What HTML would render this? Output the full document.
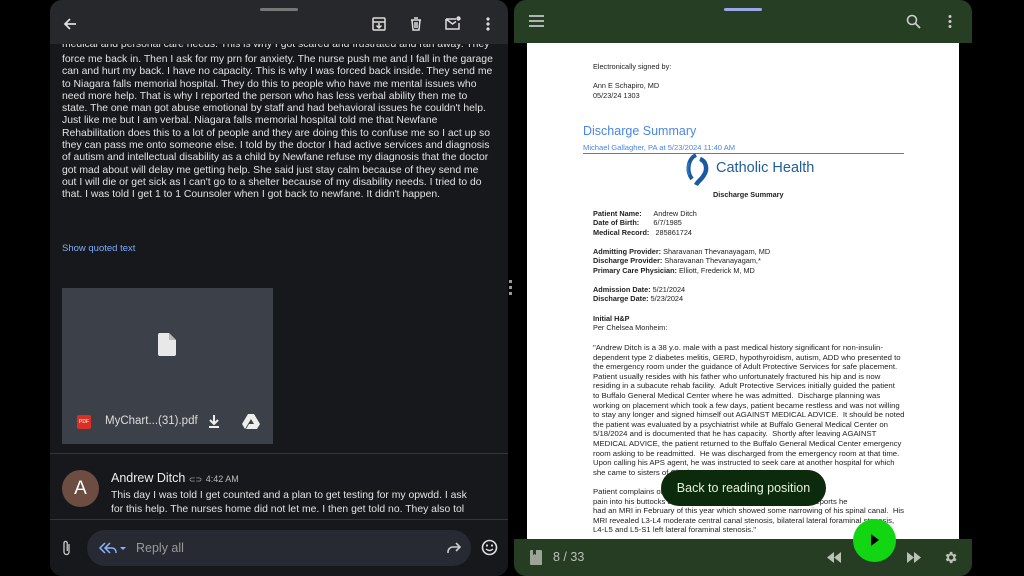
<!DOCTYPE html>
<html><head><meta charset="utf-8"><style>
*{margin:0;padding:0;box-sizing:border-box}
body{width:1024px;height:576px;background:#000;position:relative;overflow:hidden;font-family:"Liberation Sans",sans-serif}
.abs{position:absolute}
#L{left:50px;top:0;width:458px;height:576px;background:#17181b;border-radius:12px;overflow:hidden}
#Ltop{left:0;top:0;width:458px;height:44px;background:#27282c}
.txt{color:#e3e3e3;font-size:10.4px;line-height:12.3px;left:12px;white-space:nowrap}
#R{left:514px;top:0;width:458px;height:576px;background:#000;border-radius:12px;overflow:hidden}
.doc{font-size:7.3px;color:#222;line-height:9.6px;white-space:nowrap}
</style></head><body>
<div id="L" class="abs">
 <div id="Ltop" class="abs"></div>
 <div class="abs" style="left:210px;top:8px;width:38px;height:3px;border-radius:2px;background:#777"></div>
 <svg class="abs" style="left:12px;top:16px" width="16" height="16" viewBox="0 0 16 16"><path d="M14 8H3M8 3L3 8l5 5" stroke="#ddd" stroke-width="1.8" fill="none"/></svg>
 <svg class="abs" style="left:321px;top:16px" width="16" height="16" viewBox="0 0 16 16"><rect x="2" y="2" width="12" height="12" rx="1" stroke="#ddd" stroke-width="1.5" fill="none"/><path d="M2 6h12M8 7v5M5.5 9.5L8 12l2.5-2.5" stroke="#ddd" stroke-width="1.5" fill="none"/></svg>
 <svg class="abs" style="left:358px;top:16px" width="16" height="16" viewBox="0 0 16 16"><path d="M3 4h10M6 2h4M4 4l1 10h6l1-10M7 6v6M9 6v6" stroke="#ddd" stroke-width="1.5" fill="none"/></svg>
 <svg class="abs" style="left:394px;top:15px" width="18" height="16" viewBox="0 0 18 16"><path d="M2 4h10v0M2 4v10h13V8M2 4l6.5 5L12 6.5" stroke="#ddd" stroke-width="1.5" fill="none"/><circle cx="14.5" cy="3.5" r="2.2" fill="#ddd"/></svg>
 <svg class="abs" style="left:434px;top:16px" width="8" height="16"><circle cx="4" cy="3" r="1.6" fill="#ddd"/><circle cx="4" cy="8" r="1.6" fill="#ddd"/><circle cx="4" cy="13" r="1.6" fill="#ddd"/></svg>
 <div class="abs txt" style="top:44px;height:8px;overflow:hidden"><div style="margin-top:-5px">medical and personal care needs. This is why I got scared and frustrated and ran away. They</div></div>
 <div class="abs txt" style="top:54px">force me back in. Then I ask for my prn for anxiety. The nurse push me and I fall in the garage<br>can and hurt my back. I have no capacity. This is why I was forced back inside. They send me<br>to Niagara falls memorial hospital. They do this to people who have me mental issues who<br>need more help. That is why I reported the person who has less verbal ability then me to<br>state. The one man got abuse emotional by staff and had behavioral issues he couldn't help.<br>Just like me but I am verbal. Niagara falls memorial hospital told me that Newfane<br>Rehabilitation does this to a lot of people and they are doing this to confuse me so I act up so<br>they can pass me onto someone else. I told by the doctor I had active services and diagnosis<br>of autism and intellectual disability as a child by Newfane refuse my diagnosis that the doctor<br>got mad about will delay me getting help. She said just stay calm because of they send me<br>out I will die or get sick as I can't go to a shelter because of my disability needs. I tried to do<br>that. I was told I get 1 to 1 Counsoler when I got back to newfane. It didn't happen.</div>
 <div class="abs" style="left:12px;top:243px;font-size:9.5px;color:#7cacf8">Show quoted text</div>
 <div class="abs" style="left:12px;top:288px;width:211px;height:156px;background:#3c4048"></div>
 <svg class="abs" style="left:108px;top:333px" width="18" height="23" viewBox="0 0 18 23"><path d="M0 2a2 2 0 012-2h9l7 7v14a2 2 0 01-2 2H2a2 2 0 01-2-2z" fill="#e8e8e8"/><path d="M11 0v7h7" fill="#b8b8b8"/></svg>
 <div class="abs" style="left:27px;top:415px;width:14px;height:14px;background:#d93025;border-radius:2px;font-size:5px;color:#fff;text-align:center;line-height:14px">PDF</div>
 <div class="abs" style="left:55px;top:415px;font-size:11.5px;color:#ddd">MyChart...(31).pdf</div>
 <svg class="abs" style="left:157px;top:414px" width="14" height="15"><path d="M7 1v8M3 6l4 4 4-4M2 13h10" stroke="#eee" stroke-width="2" fill="none"/></svg>
 <svg class="abs" style="left:192px;top:414px" width="18" height="15" viewBox="0 0 18 15"><path d="M6 0h6l6 10h-6zM6 0L0 10l3 5 6-10zM4 15l3-5h11l-3 5z" fill="#eee"/></svg>
 <div class="abs" style="left:0;top:453px;width:458px;height:1px;background:#33353a"></div>
 <div class="abs" style="left:12px;top:470px;width:37px;height:37px;border-radius:50%;background:#6d4c41;color:#fff;font-size:19px;text-align:center;line-height:37px">A</div>
 <div class="abs" style="left:61px;top:471px;font-size:12.5px;color:#eee">Andrew Ditch <span style="font-size:8px;color:#aaa">⊂⊃</span> <span style="font-size:9px;color:#bbb">4:42 AM</span></div>
 <div class="abs txt" style="left:61px;top:489px;height:28px;overflow:hidden;line-height:14px">This day I was told I get counted and a plan to get testing for my opwdd. I ask<br>for this help. The nurses home did not let me. I then get told no. They also tol</div>
 <div class="abs" style="left:0;top:519px;width:458px;height:1px;background:#33353a"></div>
 <svg class="abs" style="left:12px;top:540px" width="10" height="16"><path d="M7 4v8a2.5 2.5 0 01-5 0V3a1.6 1.6 0 013.2 0v8" stroke="#ccc" stroke-width="1.3" fill="none"/></svg>
 <div class="abs" style="left:37px;top:530px;width:384px;height:36px;border-radius:18px;background:#272a33"></div>
 <svg class="abs" style="left:47px;top:541px" width="36" height="14"><path d="M8 2L3 7l5 5M13 2L8 7l5 5M8 7h7a4 4 0 014 4v1" stroke="#8ab4f8" stroke-width="1.5" fill="none"/><path d="M23 6h6l-3 3z" fill="#8ab4f8"/></svg>
 <div class="abs" style="left:86px;top:541px;font-size:12.5px;color:#999">Reply all</div>
 <svg class="abs" style="left:396px;top:541px" width="16" height="14"><path d="M10 2l4 4-4 4M14 6H7a5 5 0 00-5 5v1" stroke="#ccc" stroke-width="1.6" fill="none"/></svg>
 <svg class="abs" style="left:431px;top:539px" width="17" height="17"><circle cx="8.5" cy="8.5" r="7" stroke="#ddd" stroke-width="1.6" fill="none"/><circle cx="6" cy="6.5" r="1.1" fill="#ddd"/><circle cx="11" cy="6.5" r="1.1" fill="#ddd"/><path d="M5 10q3.5 3 7 0" stroke="#ddd" stroke-width="1.4" fill="none"/></svg>
</div>
<div class="abs" style="left:509px;top:280px;width:3px;height:18px;background:repeating-linear-gradient(#999 0 3px,transparent 3px 6px)"></div>
<div id="R" class="abs">
 <div class="abs" style="left:0;top:0;width:458px;height:43px;background:#263f24"></div>
 <div class="abs" style="left:210px;top:8px;width:38px;height:3px;border-radius:2px;background:#9aa8e8"></div>
 <svg class="abs" style="left:15px;top:15px" width="15" height="12"><path d="M0 1h15M0 6h15M0 11h15" stroke="#ddd" stroke-width="1.6"/></svg>
 <svg class="abs" style="left:392px;top:14px" width="15" height="15"><circle cx="6" cy="6" r="4.5" stroke="#ccc" stroke-width="1.6" fill="none"/><path d="M9.5 9.5L14 14" stroke="#ccc" stroke-width="1.8"/></svg>
 <svg class="abs" style="left:432px;top:14px" width="8" height="16"><circle cx="4" cy="2.5" r="1.5" fill="#ccc"/><circle cx="4" cy="7.5" r="1.5" fill="#ccc"/><circle cx="4" cy="12.5" r="1.5" fill="#ccc"/></svg>
 <div class="abs" style="left:13px;top:43px;width:432px;height:496px;background:#fff"></div>
 <div class="abs doc" style="left:79px;top:62px">Electronically signed by:<br><br>Ann E Schapiro, MD<br>05/23/24 1303</div>
 <div class="abs" style="left:69px;top:124px;font-size:12.5px;color:#4a86e8">Discharge Summary</div>
 <div class="abs" style="left:69px;top:143px;font-size:7.6px;color:#4a86e8">Michael Gallagher, PA at 5/23/2024 11:40 AM</div>
 <div class="abs" style="left:69px;top:153px;width:321px;height:1px;background:#777"></div>
 <svg class="abs" style="left:170px;top:153px" width="32" height="34" viewBox="0 0 32 34"><path d="M12 2C4 6 2 18 8 26" stroke="#1a5aa0" stroke-width="4" fill="none"/><path d="M16 6c6 2 8 10 4 16-2 4-6 6-8 10" stroke="#1a5aa0" stroke-width="4.5" fill="none"/><path d="M5 10C3 14 3 18 5 22" stroke="#2a78c0" stroke-width="2" fill="none"/></svg>
 <div class="abs" style="left:202px;top:160px;font-size:14.5px;color:#1f5e9c">Catholic Health</div>
 <div class="abs doc" style="left:199px;top:190px;font-weight:bold">Discharge Summary</div>
 <div class="abs doc" style="left:79px;top:209px;line-height:9.4px"><b>Patient Name:</b>&nbsp;&nbsp;&nbsp;&nbsp;&nbsp; Andrew Ditch<br><b>Date of Birth:</b>&nbsp;&nbsp;&nbsp;&nbsp;&nbsp;&nbsp; 6/7/1985<br><b>Medical Record:</b>&nbsp;&nbsp; 285861724</div>
 <div class="abs doc" style="left:79px;top:247px;line-height:9.4px"><b>Admitting Provider:</b> Sharavanan Thevanayagam, MD<br><b>Discharge Provider:</b> Sharavanan Thevanayagam,*<br><b>Primary Care Physician:</b> Elliott, Frederick M, MD</div>
 <div class="abs doc" style="left:79px;top:285px;line-height:9.4px"><b>Admission Date:</b> 5/21/2024<br><b>Discharge Date:</b> 5/23/2024</div>
 <div class="abs doc" style="left:79px;top:314px;line-height:9.4px"><b>Initial H&amp;P</b><br>Per Chelsea Monheim:</div>
 <div class="abs doc" style="left:79px;top:343px;font-size:7.75px">"Andrew Ditch is a 38 y.o. male with a past medical history significant for non-insulin-<br>dependent type 2 diabetes melitis, GERD, hypothyroidism, autism, ADD who presented to<br>the emergency room under the guidance of Adult Protective Services for safe placement.<br>Patient usually resides with his father who unfortunately fractured his hip and is now<br>residing in a subacute rehab facility.&nbsp; Adult Protective Services initially guided the patient<br>to Buffalo General Medical Center where he was admitted.&nbsp; Discharge planning was<br>working on placement which took a few days, patient became restless and was not willing<br>to stay any longer and signed himself out AGAINST MEDICAL ADVICE.&nbsp; It should be noted<br>the patient was evaluated by a psychiatrist while at Buffalo General Medical Center on<br>5/18/2024 and is documented that he has capacity.&nbsp; Shortly after leaving AGAINST<br>MEDICAL ADVICE, the patient returned to the Buffalo General Medical Center emergency<br>room asking to be readmitted.&nbsp; He was discharged from the emergency room at that time.<br>Upon calling his APS agent, he was instructed to seek care at another hospital for which<br>she came to sisters of Charity.<br><br>Patient complains of back pain that radiates down his legs.&nbsp; He has<br>pain into his buttocks and has trouble walking because of this.&nbsp; Reports he<br>had an MRI in February of this year which showed some narrowing of his spinal canal.&nbsp; His<br>MRI revealed L3-L4 moderate central canal stenosis, bilateral lateral foraminal stenosis,<br>L4-L5 and L5-S1 left lateral foraminal stenosis."</div>
 <div class="abs" style="left:147px;top:470px;width:165px;height:36px;border-radius:18px;background:#0c2a0c;color:#e6f2e0;font-size:12.5px;text-align:center;line-height:36px">Back to reading position</div>
 <div class="abs" style="left:0;top:539px;width:458px;height:37px;background:#263d24"></div>
 <svg class="abs" style="left:16px;top:550px" width="12" height="15"><path d="M0 1a1 1 0 011-1h10a1 1 0 011 1v14H1a1 1 0 01-1-1z" fill="#9aa596"/><path d="M3 0v5l1.5-1L6 5V0" fill="#263d24"/></svg>
 <div class="abs" style="left:39px;top:550px;font-size:12.5px;color:#b8c2b4">8 / 33</div>
 <svg class="abs" style="left:313px;top:552px" width="14" height="11"><path d="M7 0v11L0 5.5zM14 0v11L7 5.5z" fill="#b8c2b4"/></svg>
 <div class="abs" style="left:339px;top:519px;width:43px;height:43px;border-radius:50%;background:#13d613"></div>
 <svg class="abs" style="left:356px;top:534px" width="10" height="12"><path d="M1 0l8 6-8 6z" fill="#000"/></svg>
 <svg class="abs" style="left:393px;top:552px" width="14" height="11"><path d="M0 0v11l7-5.5zM7 0v11l7-5.5z" fill="#b8c2b4"/></svg>
 <svg class="abs" style="left:429px;top:550px" width="15" height="15" viewBox="0 0 24 24"><path fill="#b8c2b4" d="M19.4 13a7.5 7.5 0 000-2l2.1-1.6-2-3.5-2.5 1a7 7 0 00-1.7-1L15 3h-4l-.4 2.9a7 7 0 00-1.7 1l-2.5-1-2 3.5L6.5 11a7.5 7.5 0 000 2l-2.1 1.6 2 3.5 2.5-1a7 7 0 001.7 1L11 21h4l.4-2.9a7 7 0 001.7-1l2.5 1 2-3.5zM13 15.5a3.5 3.5 0 110-7 3.5 3.5 0 010 7z"/></svg>
</div>
</body></html>
